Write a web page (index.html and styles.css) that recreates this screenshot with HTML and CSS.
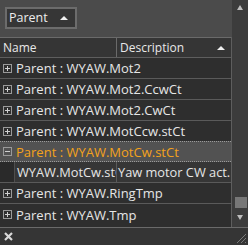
FILE: index.html
```html
<!DOCTYPE html>
<html>
<head>
<meta charset="utf-8">
<link rel="stylesheet" href="styles.css">
</head>
<body>
<div class="panel">
  <div class="body">
    <div class="main">
      <div class="toolbar">
        <div class="combo"><span class="combo-text">Parent</span><span class="tri-up"></span></div>
      </div>
      <div class="grid">
        <div class="header">
          <div class="hcell name">Name</div>
          <div class="hcell desc">Description<span class="tri-up small"></span></div>
        </div>
        <div class="row group"><span class="exp plus"></span><span class="label">Parent : WYAW.Mot2</span></div>
        <div class="row group"><span class="exp plus"></span><span class="label">Parent : WYAW.Mot2.CcwCt</span></div>
        <div class="row group"><span class="exp plus"></span><span class="label">Parent : WYAW.Mot2.CwCt</span></div>
        <div class="row group"><span class="exp plus"></span><span class="label">Parent : WYAW.MotCcw.stCt</span></div>
        <div class="row group selected"><span class="exp minus"></span><span class="label">Parent : WYAW.MotCw.stCt</span></div>
        <div class="row child">
          <div class="indent"></div>
          <div class="cell name-cell">WYAW.MotCw.stCt</div>
          <div class="cell desc-cell">Yaw motor CW act.</div>
        </div>
        <div class="row group"><span class="exp plus"></span><span class="label">Parent : WYAW.RingTmp</span></div>
        <div class="row group last"><span class="exp plus"></span><span class="label">Parent : WYAW.Tmp</span></div>
      </div>
    </div>
    <div class="vscroll">
      <span class="sb-up"></span>
      <div class="sb-thumb"></div>
      <span class="sb-down"></span>
    </div>
  </div>
  <div class="footer">
    <svg class="close" width="9" height="9" viewBox="0 0 9 9"><path d="M1 1L8 8M8 1L1 8" stroke="#d8d8d8" stroke-width="2.2"/></svg>
    <svg class="grip" width="11" height="11" viewBox="0 0 11 11"><path d="M10 1L1 10M10 5L5 10M10 9L9 10" stroke="#7a7a7a" stroke-width="1"/></svg>
  </div>
</div>
</body>
</html>
```
FILE: styles.css
```css
html, body { margin: 0; padding: 0; }
body { background: #4a4a4a; font-family: "Open Sans", "DejaVu Sans", sans-serif; font-size: 12px; color: #e4e4e4; }
.panel { width: 248px; height: 245px; display: flex; flex-direction: column; background: #4a4a4a; overflow: hidden; }
.body { display: flex; height: 227px; border-bottom: 1px solid #6a6a6a; }
.main { flex: 1; display: flex; flex-direction: column; min-width: 0; }
.toolbar { height: 37px; box-sizing: border-box; padding: 7px 0 0 5px; background: #4b4b4b; }
.combo { width: 72px; height: 22px; box-sizing: border-box; border: 2px solid #6c6c6c; background: #363636; display: flex; align-items: center; justify-content: space-between; padding: 0 7px 0 2px; }
.combo-text { color: #ececec; line-height: 18px; font-size: 12.5px; }
.tri-up { width: 0; height: 0; border-left: 4px solid transparent; border-right: 4px solid transparent; border-bottom: 4px solid #f0f0f0; }
.grid { flex: 1; display: flex; flex-direction: column; background: #2e2e2e; border-right: 1px solid #5e5e5e; }
.header { height: 21px; box-sizing: border-box; display: flex; background: #353535; border-top: 1px solid #6a6a6a; border-bottom: 1px solid #5e5e5e; }
.hcell { display: flex; align-items: center; box-sizing: border-box; color: #e8e8e8; line-height: 19px; }
.hcell.name { width: 117px; padding-left: 3px; border-right: 1px solid #6a6a6a; }
.hcell.desc { flex: 1; justify-content: space-between; padding: 0 6px 0 3px; }
.row { height: 21px; box-sizing: border-box; display: flex; align-items: center; border-bottom: 1px solid #5a5a5a; white-space: nowrap; overflow: hidden; font-size: 13px; }
.row.last { border-bottom: none; }
.label { color: #e6e6e6; line-height: 20px; }
.exp { width: 9px; height: 9px; box-sizing: border-box; border: 1px solid #9a9a9a; margin: 0 4px 0 3px; position: relative; flex: none; }
.exp::before { content: ""; position: absolute; left: 1px; top: 3px; width: 5px; height: 1px; background: #d0d0d0; }
.exp.plus::after { content: ""; position: absolute; left: 3px; top: 1px; width: 1px; height: 5px; background: #d0d0d0; }
.selected { background: #525252; border-top: 1px dotted #9a9a9a; border-bottom: 1px dotted #9a9a9a; height: 21px; margin-top: -1px; }
.selected .label { color: #f4a21c; }
.child { background: #2a2a2a; align-items: stretch; height: 21px; font-size: 12.8px; }
.indent { width: 14px; flex: none; }
.cell { display: flex; align-items: center; background: #363636; color: #e6e6e6; overflow: hidden; white-space: nowrap; box-sizing: border-box; }
.name-cell { width: 103px; padding-left: 2px; border-left: 1px solid #4e4e4e; border-right: 1px solid #5a5a5a; }
.desc-cell { flex: 1; padding-left: 1px; }
.vscroll { width: 16px; background: #3c3c3c; position: relative; flex: none; }
.sb-up { position: absolute; left: 5px; top: 5px; width: 0; height: 0; border-left: 3px solid transparent; border-right: 3px solid transparent; border-bottom: 5px solid #bdbdbd; }
.sb-thumb { position: absolute; left: 3px; top: 197px; width: 12px; height: 11px; background: #777; }
.sb-down { position: absolute; left: 5px; top: 215px; width: 0; height: 0; border-left: 3px solid transparent; border-right: 3px solid transparent; border-top: 5px solid #bdbdbd; }
.footer { flex: 1; background: #353535; display: flex; align-items: center; justify-content: space-between; padding-left: 4px; position: relative; }
.grip { position: absolute; right: 1px; bottom: 1px; }
```
